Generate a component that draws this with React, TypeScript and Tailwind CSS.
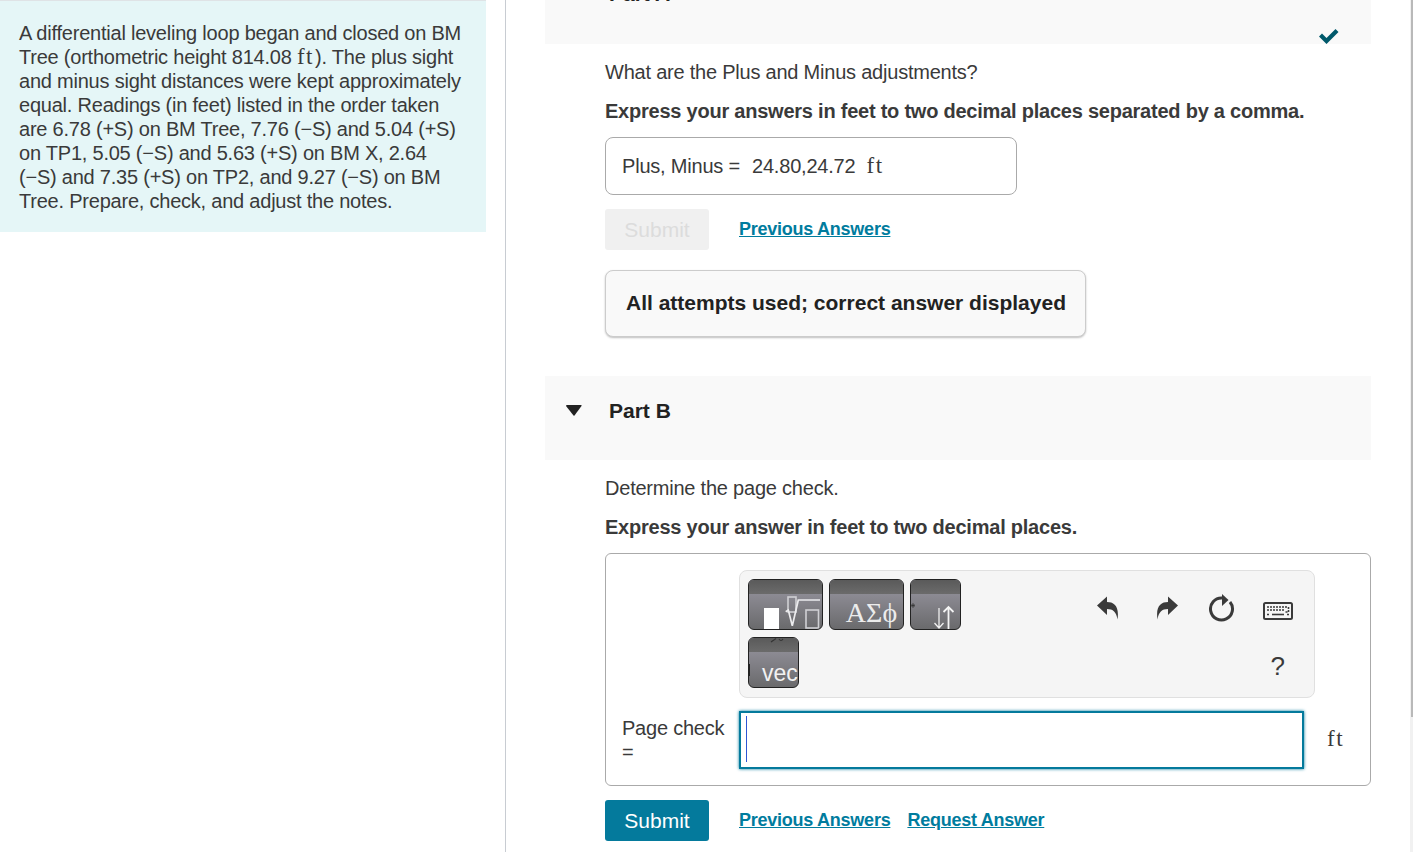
const sans = "[font-family:'Liberation_Sans',Arial,sans-serif]";

function Unit({ className = "" }: { className?: string }) {
  return <span className={`[font-family:'Liberation_Serif',serif] text-[23px] tracking-[1.5px] ${className}`}>ft</span>;
}

function SubmitButton({ disabled }: { disabled?: boolean }) {
  return (
    <button
      className={`h-[41px] w-[104px] rounded-[3px] text-[21px] leading-[41px] ${
        disabled ? "bg-[#f0f0f0] text-[#dcdcdc]" : "bg-[#047a9c] text-white"
      }`}
    >
      Submit
    </button>
  );
}

function AnswerLink({ children }: { children: string }) {
  return <a className="mb-[2px] block text-[18px] font-bold tracking-[-0.25px] text-[#007c9e] underline">{children}</a>;
}

function MathButton({ className = "", children }: { className?: string; children?: React.ReactNode }) {
  return (
    <div
      className={`relative h-[51px] overflow-hidden rounded-[6px] border border-[#222] bg-[linear-gradient(#9a98a3,#6a6a6c)] ${className}`}
    >
      <div className="h-[14px] bg-[linear-gradient(#5a5a5a,#6b6b6b)]" />
      {children}
    </div>
  );
}

function Toolbar() {
  return (
    <div className="flex h-[128px] w-[576px] rounded-[8px] border border-[#e0e0e0] bg-[#f5f5f5] pl-[8px] pr-[21px] pt-[8px]">
      <div className="flex w-[222px] flex-wrap content-start gap-x-[6px] gap-y-[7px]">
        <MathButton className="w-[75px]">
          <svg width="73" height="49" viewBox="0 0 73 49" fill="none" className="absolute left-0 top-0">
            <rect x="15" y="28" width="15" height="22" fill="#fff" />
            <rect x="39" y="17" width="8" height="15" stroke="#d0d0d4" strokeWidth="1.6" />
            <path d="M36.7 31.7 L39.3 30 L43.3 45.7 L49.3 20 H71" stroke="#ececee" strokeWidth="1.7" />
            <rect x="57" y="30" width="12.5" height="18" stroke="#d0d0d4" strokeWidth="1.6" />
          </svg>
        </MathButton>
        <MathButton className="w-[75px]">
          <div className="pl-[10px] text-center [font-family:'Liberation_Serif',serif] text-[28px] leading-[38px] text-[#ececec]">
            ΑΣϕ
          </div>
        </MathButton>
        <MathButton className="w-[51px]">
          <svg width="49" height="49" viewBox="0 0 49 49" fill="none" className="absolute left-0 top-0">
            <path d="M28 28 V48 M23.5 43 L28 48 L32.5 43" stroke="#f0f0f0" strokeWidth="1.3" />
            <path d="M37.5 49 V27 M32.5 32 L37.5 27 L42.5 32" stroke="#f4f4f4" strokeWidth="1.8" />
            <path d="M0 25.5 H4 M2 23 V28 M0.5 24 L3.5 27 M3.5 24 L0.5 27" stroke="#333" strokeWidth="0.7" />
          </svg>
        </MathButton>
        <MathButton className="w-[51px]">
          <svg width="49" height="49" viewBox="0 0 49 49" fill="none" className="absolute left-0 top-0">
            <path d="M22 4 L27 0.5 M30 1 Q32 4 34 1" stroke="#333" strokeWidth="1.2" />
            <path d="M0.5 26 V38" stroke="#222" strokeWidth="1" />
          </svg>
          <div className="pl-[13px] pt-[7px] text-[23px] leading-[29px] text-[#f2f2f2]">vec</div>
        </MathButton>
      </div>
      <div className="flex-1">
        <div className="flex items-start pl-[136px] pt-[17px]">
          <svg width="22" height="24" viewBox="0 0 22 24" fill="#3a3a3a">
            <path d="M0 9.5 L10 0.5 V6 C17 6 22.5 10 20.5 23.5 C19.5 16 16 13 10 13 V19 Z" />
          </svg>
          <svg width="22" height="24" viewBox="0 0 22 24" fill="#3a3a3a" className="ml-[37px]">
            <path d="M22 9.5 L12 0.5 V6 C5 6 -0.5 10 1.5 23.5 C2.5 16 6 13 12 13 V19 Z" />
          </svg>
          <svg width="26" height="29" viewBox="0 0 26 29" fill="none" className="ml-[31px] -mt-[2px]">
            <path d="M13 4 A11 11 0 1 0 21 8" stroke="#3a3a3a" strokeWidth="3" />
            <path d="M13 0 L19.5 6 L13 12 Z" fill="#3a3a3a" />
          </svg>
          <svg width="30" height="18" viewBox="0 0 30 18" fill="none" className="ml-[28px] mt-[6px]">
            <rect x="1" y="1" width="28" height="16" rx="1.5" stroke="#3a3a3a" strokeWidth="2" />
            <path d="M4 5 H24 M4 8 H22 M25.5 5 V10 H22" stroke="#3a3a3a" strokeWidth="1.6" strokeDasharray="2 1" />
            <path d="M9 12.5 H21" stroke="#3a3a3a" strokeWidth="1.6" />
            <path d="M4 12.5 H6 M24 12.5 H26" stroke="#3a3a3a" strokeWidth="1.6" />
          </svg>
        </div>
        <div className="mt-[29px] pr-[8px] text-right text-[26px] leading-[28px] text-[#3a3a3a]">?</div>
      </div>
    </div>
  );
}

export default function App() {
  return (
    <div className={`flex h-[852px] w-[1413px] overflow-hidden bg-white text-[20px] leading-[24px] text-[#3a3a3a] ${sans}`}>
      {/* problem statement */}
      <div className="w-[506px] shrink-0 border-r border-[#c8ccd2] pr-[19px]">
        <div className="h-[232px] border-t border-[#dfe3e6] bg-[#e5f6f7] pl-[19px] pr-[20px] pt-[20px] tracking-[-0.22px]">
          A differential leveling loop began and closed on BM Tree (orthometric height 814.08 <Unit />
          <span className="ml-[1px]">). The plus sight</span> and minus sight distances were kept approximately equal.
          Readings (in feet) listed in the order taken are 6.78 (+S) on BM Tree, 7.76 (−S) and 5.04 (+S) on TP1, 5.05
          (−S) and 5.63 (+S) on BM X, 2.64 (−S) and 7.35 (+S) on TP2, and 9.27 (−S) on BM Tree. Prepare, check, and
          adjust the notes.
        </div>
      </div>

      <div className="w-[865px] shrink-0 pl-[39px]">
        {/* Part A, scrolled off the top */}
        <div className="relative h-[44px] overflow-hidden bg-[#f9f9f9]">
          <div className="-mt-[18px] pl-[64px] text-[21px] font-bold text-[#222]">Part A</div>
        </div>
        <svg width="20" height="16" viewBox="0 0 20 16" fill="#00596b" className="absolute left-[1319px] top-[28px]">
          <path d="M0 8.5 L3 5.5 L7.5 10 L16.5 1 L19.5 4 L7.5 16 Z" />
        </svg>

        <div className="pl-[60px]">
          <p className="mt-[16px] tracking-[-0.22px]">What are the Plus and Minus adjustments?</p>
          <p className="mt-[15px] font-bold tracking-[-0.23px]">
            Express your answers in feet to two decimal places separated by a comma.
          </p>
          <div className="mt-[14px] flex h-[58px] w-[412px] items-center rounded-[8px] border border-[#aaa] pl-[16px] tracking-[-0.2px]">
            <span>Plus, Minus =</span>
            <span className="ml-[12px]">24.80,24.72</span>
            <Unit className="ml-[11px]" />
          </div>
          <div className="mt-[14px] flex items-center gap-[30px]">
            <SubmitButton disabled />
            <AnswerLink>Previous Answers</AnswerLink>
          </div>
          <div className="mt-[20px] flex h-[67px] w-[481px] items-center rounded-[8px] border border-[#ccc] bg-[#f9f9f9] pb-[2px] pl-[20px] text-[21px] font-bold text-[#222] shadow-[0_1px_2px_rgba(0,0,0,0.25)]">
            All attempts used; correct answer displayed
          </div>
        </div>

        {/* Part B */}
        <div className="mt-[39px] flex h-[84px] items-start bg-[#f9f9f9] pl-[21px] pt-[23px]">
          <svg width="16" height="11" viewBox="0 0 16 11" fill="#222" className="mt-[6px]">
            <path d="M0 1 Q0 0 1 0 H15 Q16 0 15.5 1 L8.5 10.5 Q8 11 7.5 10.5 Z" />
          </svg>
          <span className="ml-[27px] text-[21px] font-bold text-[#222]">Part B</span>
        </div>

        <div className="pl-[60px]">
          <p className="mt-[16px] tracking-[-0.22px]">Determine the page check.</p>
          <p className="mt-[15px] font-bold tracking-[-0.23px]">Express your answer in feet to two decimal places.</p>
          <div className="mt-[14px] h-[233px] w-[766px] rounded-[6px] border border-[#aaa] pl-[133px] pt-[16px]">
            <Toolbar />
            <div className="-ml-[117px] mt-[13px] flex">
              <div className="w-[117px] pt-[5px] tracking-[-0.22px]">
                Page check
                <br />=
              </div>
              <div className="h-[58px] w-[565px] border-2 border-[#047a9c] pl-[5px] pt-[3px] shadow-[0_0_3px_#047a9c]">
                <div className="h-[46px] w-[1px] bg-[#2f55d4]" />
              </div>
              <Unit className="ml-[23px] mt-[16px]" />
            </div>
          </div>
          <div className="mt-[14px] flex items-center">
            <SubmitButton />
            <div className="ml-[30px]">
              <AnswerLink>Previous Answers</AnswerLink>
            </div>
            <div className="ml-[17px]">
              <AnswerLink>Request Answer</AnswerLink>
            </div>
          </div>
        </div>
      </div>

      {/* page scrollbar */}
      <div className="ml-[39px] flex h-full w-[3px] justify-end bg-[#f1f1f1]">
        <div className="h-[717px] w-[2px] bg-[#b9b9b9]" />
      </div>
    </div>
  );
}
